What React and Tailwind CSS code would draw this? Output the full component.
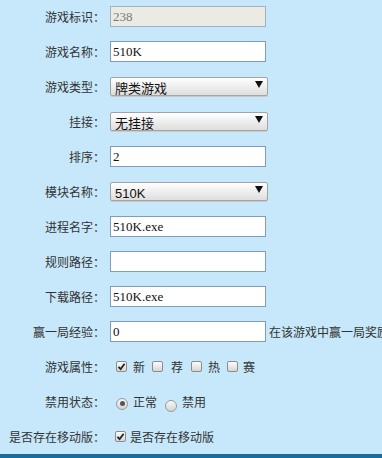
import React from "react";

const cjk = "font-['Noto_Sans_CJK_SC',sans-serif]";

const Label = ({ children }) => (
  <div className={`w-[105px] shrink-0 text-right text-[12px] text-[#333] ${cjk}`}>{children}</div>
);

const TextInput = ({ value, disabled }) => (
  <div
    className={`ml-[5px] flex h-[21px] w-[156px] shrink-0 items-center border px-[2px] font-['Liberation_Serif','Noto_Sans_CJK_SC',serif] text-[13px] ${
      disabled ? "border-[#9fb1c2] bg-[#ebebe4] text-[#7a7a7a]" : "border-[#7f9db9] bg-white text-[#111]"
    }`}
  >
    {value}
  </div>
);

const SelectBox = ({ value }) => (
  <div className="ml-[5px] flex h-[19px] w-[158px] shrink-0 items-center justify-between rounded-[2px] border border-[#a3a3a3] bg-gradient-to-b from-white to-[#dedede] pl-[4px] pr-[4px] shadow-[0_1px_0_#c9c9c9]">
    <span className="translate-y-[2px] text-[13px] leading-none text-[#111] font-['Liberation_Sans','Noto_Sans_CJK_SC',sans-serif]">{value}</span>
    <svg width="8" height="7" viewBox="0 0 8 7" className="-translate-y-[2px]">
      <path d="M0 0 H8 L4 7 Z" fill="#111" />
    </svg>
  </div>
);

const Check = ({ checked }) => (
  <span className="inline-flex h-[11px] w-[11px] shrink-0 items-center justify-center rounded-[2px] border border-[#8c8c8c] bg-gradient-to-b from-[#fcfcfc] to-[#d6d6d6]">
    {checked && (
      <svg width="9" height="9" viewBox="0 0 9 9">
        <path d="M1.5 4.8 L3.6 7 L7.6 1.8" fill="none" stroke="#222" strokeWidth="1.8" />
      </svg>
    )}
  </span>
);

const Radio = ({ checked, className = "" }) => (
  <span className={`inline-flex h-[12px] w-[12px] shrink-0 items-center justify-center rounded-full border border-[#9a9a9a] bg-gradient-to-b from-[#f8f8f8] to-[#d4d4d4] ${className}`}>
    {checked && <span className="h-[5px] w-[5px] rounded-full bg-[#555]" />}
  </span>
);

const Row = ({ label, children }) => (
  <div className="flex h-[35px] items-center whitespace-nowrap">
    <Label>{label}</Label>
    {children}
  </div>
);

export default function App() {
  return (
    <div className="h-[458px] w-[382px] overflow-hidden bg-[#c6e8fa]">
      <div className="-mt-px">
        <Row label="游戏标识：">
          <TextInput value="238" disabled />
        </Row>
        <Row label="游戏名称：">
          <TextInput value="510K" />
        </Row>
        <Row label="游戏类型：">
          <SelectBox value="牌类游戏" />
        </Row>
        <Row label="挂接：">
          <SelectBox value="无挂接" />
        </Row>
        <Row label="排序：">
          <TextInput value="2" />
        </Row>
        <Row label="模块名称：">
          <SelectBox value="510K" />
        </Row>
        <Row label="进程名字：">
          <TextInput value="510K.exe" />
        </Row>
        <Row label="规则路径：">
          <TextInput value="" />
        </Row>
        <Row label="下载路径：">
          <TextInput value="510K.exe" />
        </Row>
        <Row label="赢一局经验：">
          <TextInput value="0" />
          <span className={`ml-[3px] text-[12px] text-[#333] ${cjk}`}>在该游戏中赢一局奖励的经验值</span>
        </Row>
        <Row label="游戏属性：">
          <div className={`ml-[11px] flex items-center text-[12px] text-[#333] ${cjk}`}>
            <Check checked />
            <span className="ml-[6px] mr-[7px]">新</span>
            <Check />
            <span className="ml-[8px] mr-[8px]">荐</span>
            <Check />
            <span className="ml-[6px] mr-[7px]">热</span>
            <Check />
            <span className="ml-[5px]">赛</span>
          </div>
        </Row>
        <Row label="禁用状态：">
          <div className={`ml-[11px] flex items-center text-[12px] text-[#333] ${cjk}`}>
            <Radio checked className="translate-y-[2px]" />
            <span className="ml-[5px] mr-[8px]">正常</span>
            <Radio className="translate-y-[4px]" />
            <span className="ml-[5px]">禁用</span>
          </div>
        </Row>
        <Row label="是否存在移动版：">
          <div className={`ml-[10px] flex items-center text-[12px] text-[#333] ${cjk}`}>
            <Check checked />
            <span className="ml-[4px]">是否存在移动版</span>
          </div>
        </Row>
      </div>
      <div className="h-[10px] bg-[#1a6c9c]" />
    </div>
  );
}
